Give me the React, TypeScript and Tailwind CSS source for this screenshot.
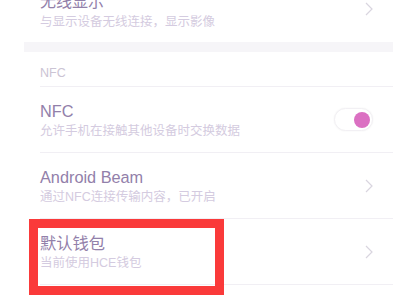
import React from "react";

const font = { fontFamily: '"Liberation Sans", "Noto Sans CJK SC", sans-serif' };

const Chevron = () => (
  <svg width="8" height="14" viewBox="0 0 8 14" className="shrink-0">
    <path d="M1 1 L7 7 L1 13" fill="none" stroke="#d9d5df" strokeWidth="1.2" />
  </svg>
);

const Toggle = () => (
  <div className="w-[39px] h-[23px] rounded-full bg-white border border-[#f2f0f4] shadow-[0_0_2px_rgba(0,0,0,0.05)] flex items-center justify-end pr-[2px] shrink-0">
    <div className="w-[16px] h-[16px] rounded-full bg-[#db70c2]" />
  </div>
);

interface RowProps {
  title: string;
  subtitle: string;
  right: React.ReactNode;
  last?: boolean;
}

const Row = ({ title, subtitle, right, last }: RowProps) => (
  <div className="pl-[16px]">
    <div
      className={
        "h-[66px] flex items-center justify-between pr-[20px] " +
        (last ? "" : "border-b border-[#f1eff4]")
      }
    >
      <div className="flex flex-col gap-[2px]">
        <span className="text-[16.3px] leading-[20px] text-[#9280aa]">{title}</span>
        <span className="text-[12.5px] leading-[16px] text-[#d4cbe0]">{subtitle}</span>
      </div>
      {right}
    </div>
  </div>
);

export default function App() {
  return (
    <div className="w-[400px] h-[300px] bg-white overflow-hidden relative" style={font}>
      <div className="ml-[24px] w-[369px]">
        {/* previous item, cut off at the top */}
        <div className="h-[42px] overflow-hidden pl-[16px] pr-[20px] flex items-end justify-between pb-[12px]">
          <div className="flex flex-col gap-[2px]">
            <span className="text-[16px] leading-[20px] text-[#9280aa]">无线显示</span>
            <span className="text-[12.5px] leading-[16px] text-[#d4cbe0]">与显示设备无线连接，显示影像</span>
          </div>
          <div className="self-start mt-[2px]">
            <Chevron />
          </div>
        </div>
        <div className="h-[10px] bg-[#f6f5f8]" />
        <div className="pl-[16px]">
          <div className="h-[35px] pt-[13px] border-b border-[#f1eff4]">
            <span className="block text-[12.5px] leading-[16px] text-[#cbc4d4]">NFC</span>
          </div>
        </div>
        <Row title="NFC" subtitle="允许手机在接触其他设备时交换数据" right={<Toggle />} />
        <Row title="Android Beam" subtitle="通过NFC连接传输内容，已开启" right={<Chevron />} />
        <Row title="默认钱包" subtitle="当前使用HCE钱包" right={<Chevron />} />
      </div>
      {/* annotation box */}
      <div className="absolute left-[29px] top-[219px] w-[195px] h-[76px] border-[9px] border-[#fa3a3a]" />
    </div>
  );
}
